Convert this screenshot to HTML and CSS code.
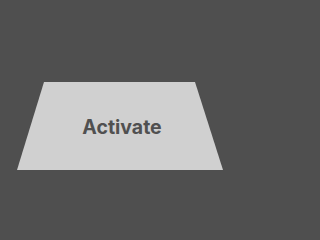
FILE: index.html
```html
<!DOCTYPE html>
<html>
<head>
<meta charset="utf-8">
<link rel="stylesheet" href="styles.css">
</head>
<body>
<div class="stage">
  <button class="activate">Activate</button>
</div>
</body>
</html>
```
FILE: styles.css
```css
html, body {
  margin: 0;
  padding: 0;
  height: 240px;
  background: #4f4f4f;
}
.stage {
  padding-top: 82px;
  padding-left: 17px;
}
.activate {
  display: flex;
  align-items: center;
  justify-content: center;
  width: 206px;
  height: 88px;
  border: none;
  padding: 2px 0 0 4px;
  margin: 0;
  background: #d0d0d0;
  color: #505050;
  font-family: Inter, "Liberation Sans", sans-serif;
  font-weight: 700;
  font-size: 19.5px;
  clip-path: polygon(27px 0, 178px 0, 206px 88px, 0 88px);
}
```
